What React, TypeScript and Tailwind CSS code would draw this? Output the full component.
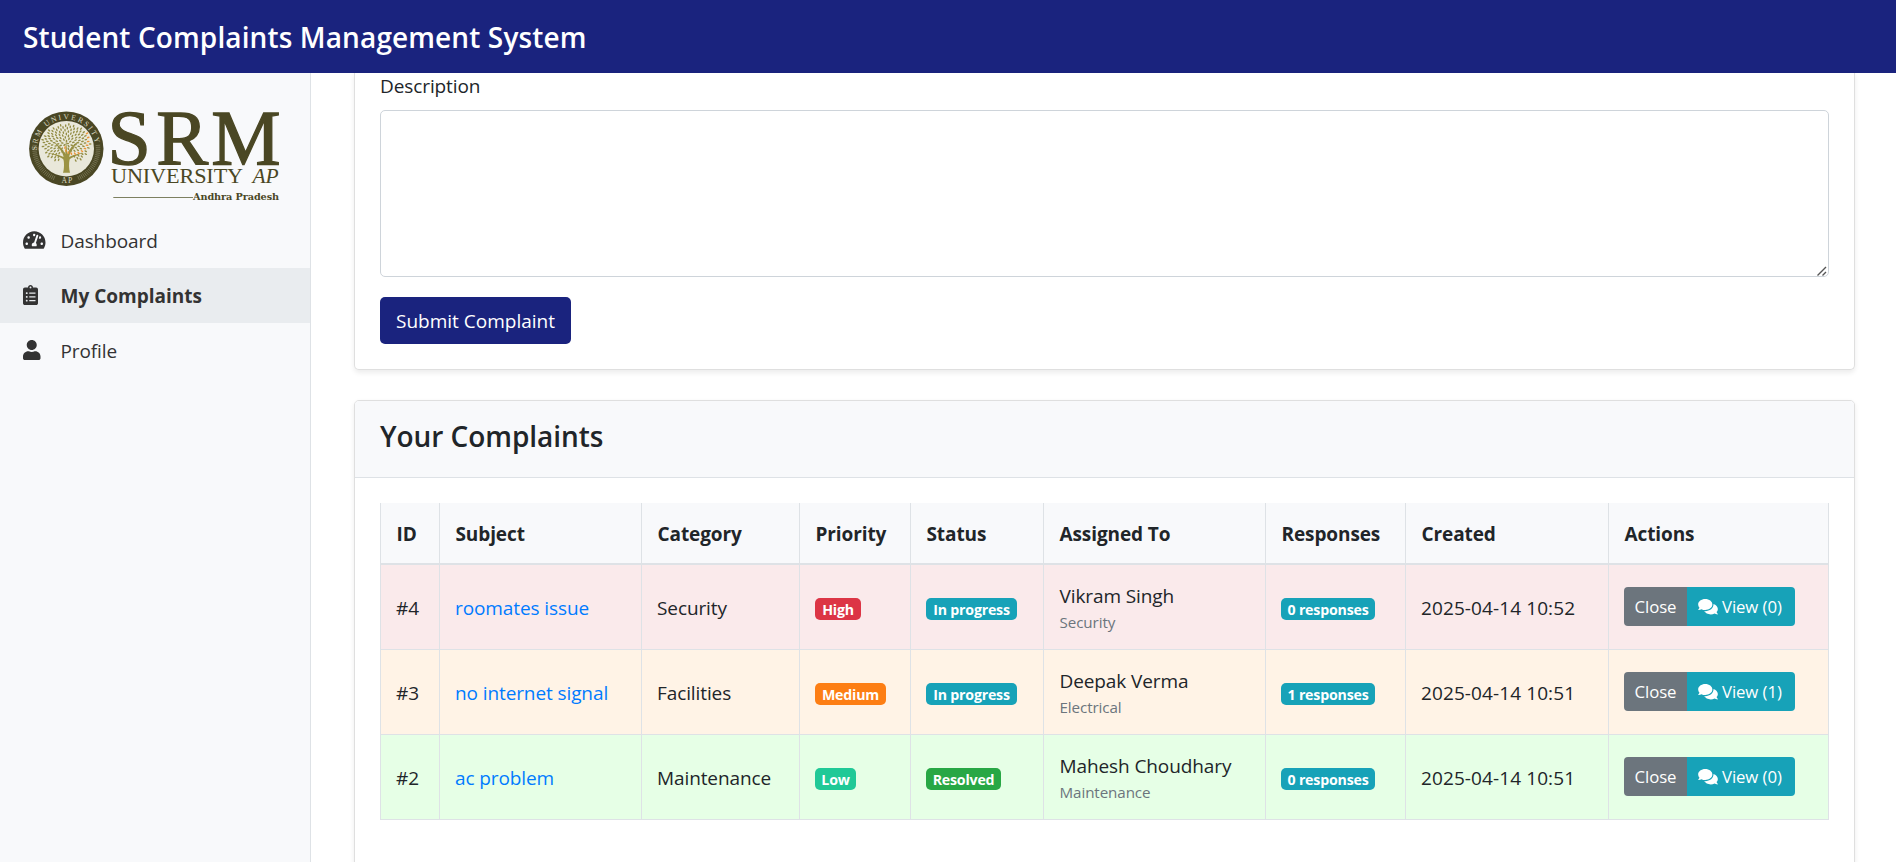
import React from "react";
import { FaTachometerAlt, FaClipboardList, FaUser, FaComments } from "react-icons/fa";

type Complaint = {
  id: string;
  subject: string;
  category: string;
  priority: string;
  priorityClass: string;
  status: string;
  statusClass: string;
  assignee: string;
  department: string;
  responses: number;
  created: string;
  rowClass: string;
};

const complaints: Complaint[] = [
  {
    id: "#4",
    subject: "roomates issue",
    category: "Security",
    priority: "High",
    priorityClass: "w-[46px] bg-[#dc3545]",
    status: "In progress",
    statusClass: "w-[91px] bg-[#17a2b8]",
    assignee: "Vikram Singh",
    department: "Security",
    responses: 0,
    created: "2025-04-14 10:52",
    rowClass: "bg-[#faeaeb]",
  },
  {
    id: "#3",
    subject: "no internet signal",
    category: "Facilities",
    priority: "Medium",
    priorityClass: "w-[71px] bg-[#fd7e14]",
    status: "In progress",
    statusClass: "w-[91px] bg-[#17a2b8]",
    assignee: "Deepak Verma",
    department: "Electrical",
    responses: 1,
    created: "2025-04-14 10:51",
    rowClass: "bg-[#fff3e6]",
  },
  {
    id: "#2",
    subject: "ac problem",
    category: "Maintenance",
    priority: "Low",
    priorityClass: "w-[41px] bg-[#20c997]",
    status: "Resolved",
    statusClass: "w-[75px] bg-[#28a745]",
    assignee: "Mahesh Choudhary",
    department: "Maintenance",
    responses: 0,
    created: "2025-04-14 10:51",
    rowClass: "bg-[#e6ffe6]",
  },
];

const columns = [
  { label: "ID", width: "w-[59px]" },
  { label: "Subject", width: "w-[202px]" },
  { label: "Category", width: "w-[158px]" },
  { label: "Priority", width: "w-[111px]" },
  { label: "Status", width: "w-[133px]" },
  { label: "Assigned To", width: "w-[222px]" },
  { label: "Responses", width: "w-[140px]" },
  { label: "Created", width: "w-[203px]" },
  { label: "Actions", width: "w-[221px]" },
];

// Leaves follow a sunflower spiral squeezed into the crown of the tree.
const leaves = Array.from({ length: 150 }, (_, i) => {
  const a = i * 2.39996;
  const r = Math.sqrt((i + 0.5) / 150);
  return { x: 46.3 + Math.cos(a) * r * 24.3, y: 43.6 + Math.sin(a) * r * 19.6, a: (a * 180) / Math.PI, fruit: i % 13 === 6 };
}).filter((l) => !(Math.abs(l.x - 46.3) < 7 && l.y > 54));

// Radial ticks on the lower two thirds of the ring, leaving room for the lettering.
const ticks = Array.from({ length: 56 }, (_, i) => -6 + i * (192 / 55)).filter((d) => Math.abs(d - 90) > 20);

function Logo() {
  return (
    <svg width="270" height="110" viewBox="0 0 270 110" className="block overflow-visible">
      <defs>
        <path id="ring-top" d="M18.4 57 A29.2 29.2 0 1 1 74.2 57" />
      </defs>
      <circle cx="46.3" cy="48.7" r="37.2" fill="#4a4724" />
      {ticks.map((d) => {
        const c = Math.cos((d * Math.PI) / 180);
        const s = Math.sin((d * Math.PI) / 180);
        return (
          <line
            key={d}
            x1={46.3 + c * 29.5}
            y1={48.7 + s * 29.5}
            x2={46.3 + c * 34}
            y2={48.7 + s * 34}
            stroke="#9c9b7c"
            strokeWidth="0.5"
          />
        );
      })}
      <circle cx="46.3" cy="48.7" r="27.7" fill="#e9e8da" />
      <text fontFamily="Liberation Serif, serif" fontSize="7.6" fill="#dedcc4">
        <textPath href="#ring-top" startOffset="7" textLength="88">
          SRM UNIVERSITY
        </textPath>
      </text>
      <text x="41.5" y="82.7" fontFamily="Liberation Serif, serif" fontSize="7.6" fill="#dedcc4" textLength="10.5">
        AP
      </text>
      <path
        d="M43 72.8 C44.4 69 44.2 62 43.4 59.5 C41 57 35 55.5 30 53 C36 54.4 41 55.4 43.6 57 C43 52 38 47 34 42 C39 45.5 43.5 50 45.3 54 L46 38 L47.3 54 C49 49 54 44 59 41 C54 47 50 52 49.2 57 C52 55.2 57 54 63 52.5 C58 55.5 52 57 49.6 59.5 C48.8 63 48.8 69 50 72.8 Z"
        fill="#9b9345"
      />
      {leaves.map((l, i) => (
        <ellipse
          key={i}
          cx={l.x}
          cy={l.y}
          rx="1.45"
          ry="0.75"
          fill={l.fruit ? "#ee9335" : "#938d45"}
          transform={`rotate(${l.a} ${l.x} ${l.y})`}
        />
      ))}
      <g fill="#4a4724" fontFamily="Liberation Serif, serif">
        <text x="87.6 136.3 191.3" y="64.2" fontSize="78" stroke="#4a4724" strokeWidth="1.3">
          SRM
        </text>
        <text x="91" y="83" fontSize="20.5" textLength="132" lengthAdjust="spacingAndGlyphs">
          UNIVERSITY
        </text>
        <text x="232.5" y="83" fontSize="20.5" fontStyle="italic" textLength="26" lengthAdjust="spacingAndGlyphs">
          AP
        </text>
        <text
          x="173"
          y="99.8"
          fontFamily="DejaVu Serif, serif"
          fontWeight="700"
          fontSize="10"
          textLength="86"
          lengthAdjust="spacingAndGlyphs"
        >
          Andhra Pradesh
        </text>
      </g>
      <line x1="93.3" y1="97.5" x2="173" y2="97.5" stroke="#7d8060" strokeWidth="1" />
    </svg>
  );
}

function Badge({ className, children }: { className: string; children: React.ReactNode }) {
  return (
    <span
      className={`flex h-[22px] items-center justify-center rounded-[5px] pt-[2px] text-[14.2px] font-bold tracking-[-0.2px] whitespace-nowrap text-white ${className}`}
    >
      {children}
    </span>
  );
}

function Sidebar() {
  return (
    <aside className="w-[311px] shrink-0 border-r border-[#dee2e6] bg-[#f8f9fb] pt-[27px] text-[#333333]">
      <div className="h-[113px] pl-5">
        <Logo />
      </div>
      <nav>
        <a className="flex h-[55px] items-center pl-[23px]">
          <span className="flex w-[37.5px] pb-px">
            <FaTachometerAlt className="h-5 w-[22.5px]" />
          </span>
          <span className="pt-[2px]">Dashboard</span>
        </a>
        <a className="flex h-[55px] items-center bg-[#e9ecef] pl-[23px] font-bold tracking-[0]">
          <span className="flex w-[37.5px] pb-px">
            <FaClipboardList className="h-5 w-[15px]" />
          </span>
          <span className="pt-[2px]">My Complaints</span>
        </a>
        <a className="flex h-[55px] items-center pl-[23px]">
          <span className="flex w-[37.5px] pb-px">
            <FaUser className="h-5 w-[17.5px]" />
          </span>
          <span className="pt-[2px]">Profile</span>
        </a>
      </nav>
    </aside>
  );
}

function ComplaintForm() {
  return (
    <section className="h-[297px] rounded-b-[5px] border border-t-0 border-[#dfdfdf] bg-white px-[25px] shadow-[0_2.5px_5px_rgba(0,0,0,0.075)]">
      <label className="block h-[37px] leading-[27px]">Description</label>
      <div className="relative h-[167px]">
        <textarea className="block h-full w-full resize-none rounded-[5px] border border-[#ced4da] bg-white" />
        <svg className="absolute right-[2px] bottom-[1px]" width="10" height="10" viewBox="0 0 10 10">
          <path d="M0.5 9.5 L9 1 M5.5 9.5 L9 6" stroke="#555" strokeWidth="1.4" fill="none" />
        </svg>
      </div>
      <button className="mt-5 block h-[47px] w-[191px] rounded-[5px] bg-[#1a237e] pt-[2px] text-white tracking-[0]">
        Submit Complaint
      </button>
    </section>
  );
}

function ComplaintsTable() {
  return (
    <table className="w-[1449px] table-fixed border-separate border-spacing-0">
      <thead>
        <tr className="h-[62px] bg-[#f8f9fb]">
          {columns.map((c) => (
            <th
              key={c.label}
              className={`${c.width} border-b-2 border-l border-[#dee2e6] p-0 pt-[2px] pl-[15.5px] text-left font-bold last:border-r`}
            >
              {c.label}
            </th>
          ))}
        </tr>
      </thead>
      <tbody className="[&_td]:border-b [&_td]:border-l [&_td]:border-[#dee2e6] [&_td]:p-0 [&_td]:pl-[15px] [&_td]:align-middle">
        {complaints.map((c) => (
          <tr key={c.id} className={`h-[85px] ${c.rowClass}`}>
            <td>
              <div className="pt-[2px]">{c.id}</div>
            </td>
            <td>
              <div className="pt-[2px] text-[#007bff]">{c.subject}</div>
            </td>
            <td>
              <div className="pt-[2px]">{c.category}</div>
            </td>
            <td>
              <Badge className={`mt-[3px] ${c.priorityClass}`}>{c.priority}</Badge>
            </td>
            <td>
              <Badge className={`mt-[3px] ${c.statusClass}`}>{c.status}</Badge>
            </td>
            <td>
              <div className="pl-[0.5px] leading-[30px]">{c.assignee}</div>
              <div className="pl-[0.5px] text-[15.2px] leading-[22px] text-[#6c757d]">{c.department}</div>
            </td>
            <td>
              <Badge className="mt-[3px] w-[94px] bg-[#17a2b8]">{c.responses} responses</Badge>
            </td>
            <td>
              <div className="pt-[2px] tracking-[0.1px]">{c.created}</div>
            </td>
            <td className="border-r">
              <div className="-mt-px flex text-[16.8px] tracking-[-0.1px] text-white">
                <button className="h-[39px] w-[63px] rounded-l-[4px] bg-[#6c757d]">Close</button>
                <button className="flex h-[39px] w-[108px] items-center gap-[3px] rounded-r-[4px] bg-[#17a2b8] pl-2.5">
                  <FaComments className="h-[17.5px] w-[22px]" />
                  <span>View ({c.responses})</span>
                </button>
              </div>
            </td>
          </tr>
        ))}
      </tbody>
    </table>
  );
}

export default function App() {
  return (
    <div className="flex h-[862px] flex-col overflow-hidden bg-white font-['Open_Sans','Noto_Sans',sans-serif] text-[19px] tracking-[-0.1px] text-[#212529]">
      <header className="flex h-[73px] shrink-0 items-center bg-[#1a237e] pt-px pl-[23px]">
        <h1 className="text-[28px] font-semibold tracking-[0.12px] text-white">Student Complaints Management System</h1>
      </header>
      <div className="flex min-h-0 flex-1">
        <Sidebar />
        <main className="flex-1 pr-[41px] pl-[43px]">
          <ComplaintForm />
          <section className="mt-[30px] h-[560px] rounded-[5px] border border-[#dfdfdf] bg-white shadow-[0_2.5px_5px_rgba(0,0,0,0.075)]">
            <div className="h-[77px] rounded-t-[4px] border-b border-[#dee2e6] bg-[#f8f9fb] px-[25px] pt-[17px]">
              <h2 className="text-[28px] leading-[36px] font-semibold tracking-[-0.05px]">Your Complaints</h2>
            </div>
            <div className="p-[25px]">
              <ComplaintsTable />
            </div>
          </section>
        </main>
      </div>
    </div>
  );
}
